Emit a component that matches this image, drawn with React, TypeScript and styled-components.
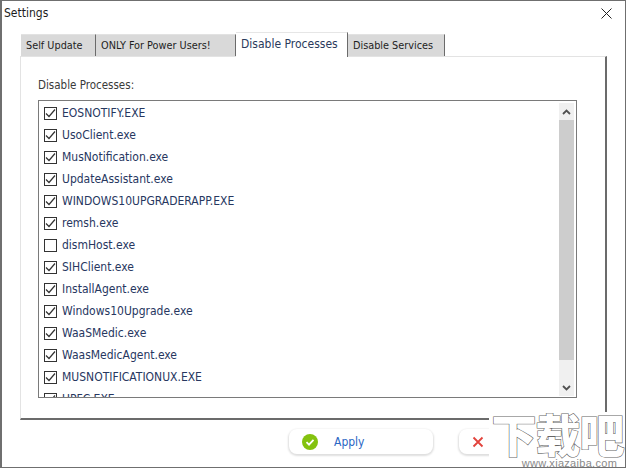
import React from "react";
import styled, { createGlobalStyle } from "styled-components";

const GlobalStyle = createGlobalStyle`
  html, body {
    margin: 0;
    padding: 0;
    background: #fff;
  }
  body {
    font-family: "DejaVu Sans Condensed", "DejaVu Sans", sans-serif;
    font-stretch: condensed;
  }
`;

const Window = styled.div`
  position: relative;
  box-sizing: border-box;
  width: 626px;
  height: 468px;
  overflow: hidden;
  background: #fff;
  border: 1px solid #6f6f6f;
  border-left-width: 2px;
  display: flex;
  flex-direction: column;
`;

const TitleBar = styled.div`
  height: 24px;
  flex: none;
  display: flex;
  align-items: center;
  justify-content: space-between;
  padding: 0 13px 0 2px;
  font-size: 12px;
  color: #1c1c1c;
`;

const TabStrip = styled.div`
  flex: none;
  height: 24px;
  margin-left: 19px;
  margin-top: 7px;
  display: flex;
  align-items: flex-end;
  position: relative;
  z-index: 1;
`;

const Tab = styled.div<{ $active?: boolean; $width: number }>`
  box-sizing: border-box;
  width: ${(p) => p.$width}px;
  height: ${(p) => (p.$active ? 25 : 22)}px;
  margin-bottom: ${(p) => (p.$active ? -1 : 0)}px;
  padding-left: 5px;
  padding-bottom: ${(p) => (p.$active ? 3 : 0)}px;
  display: flex;
  align-items: center;
  background: ${(p) => (p.$active ? "#fff" : "#d9d9d9")};
  border-right: 1px solid #6b6b6b;
  border-top: 1px solid ${(p) => (p.$active ? "#e6e6e6" : "#e2e2e2")};
  font-size: ${(p) => (p.$active ? 12 : 10.8)}px;
  color: ${(p) => (p.$active ? "#2a3a5c" : "#1e1e1e")};
  white-space: nowrap;
`;

const Pane = styled.div`
  box-sizing: border-box;
  margin: 0 18px 0 18px;
  height: 364px;
  flex: none;
  border-top: 1px solid #e3e3e3;
  border-left: 1px solid #e3e3e3;
  border-right: 2px solid #6b6b6b;
  border-bottom: 2px solid #6b6b6b;
  padding: 21px 28px 0 17px;
`;

const GroupLabel = styled.div`
  font-size: 11.5px;
  line-height: 14px;
  color: #3a3a3a;
  margin-bottom: 8px;
`;

const ListBox = styled.div`
  box-sizing: border-box;
  height: 298px;
  border: 1px solid #7a7a7a;
  display: flex;
  overflow: hidden;
`;

const Rows = styled.div`
  flex: 1;
  padding: 1px 0 0 5px;
  overflow: hidden;
`;

const Row = styled.div`
  height: 22px;
  display: flex;
  align-items: center;
  gap: 5px;
  font-size: 12px;
  color: #27375f;
  white-space: nowrap;
`;

const Box = styled.span`
  box-sizing: border-box;
  width: 13px;
  height: 13px;
  flex: none;
  border: 1px solid #333;
  background: #fff;
  display: flex;
  align-items: center;
  justify-content: center;
`;

const ScrollBar = styled.div`
  width: 15px;
  flex: none;
  margin: 2px 2px 1px 0;
  background: #f0f0f0;
  display: flex;
  flex-direction: column;
`;

const ScrollButton = styled.div`
  height: 17px;
  flex: none;
  display: flex;
  align-items: center;
  justify-content: center;
`;

const ScrollThumb = styled.div`
  height: 240px;
  flex: none;
  background: #cdcdcd;
`;

const ScrollTrack = styled.div`
  flex: 1;
`;

const Footer = styled.div`
  flex: 1;
  display: flex;
  padding: 9px 0 0 287px;
  gap: 26px;
`;

const ActionButton = styled.div<{ $width: number }>`
  box-sizing: border-box;
  width: ${(p) => p.$width}px;
  height: 25px;
  border-radius: 8px;
  background: #fff;
  box-shadow: 0 1px 2px 1px rgba(0, 0, 0, 0.13);
  display: flex;
  align-items: center;
  padding-left: 13px;
  gap: 16px;
  font-size: 12px;
  color: #2a66c4;
`;

const Watermark = styled.div`
  position: absolute;
  right: -1px;
  bottom: -1px;
  width: 137px;
  height: 56px;
  background: #fff;
  display: flex;
  flex-direction: column;
  align-items: center;
`;

const WatermarkTitle = styled.div`
  font-family: "Noto Sans CJK SC", sans-serif;
  font-weight: 900;
  font-size: 45px;
  height: 46px;
  line-height: 44px;
  letter-spacing: -1px;
  color: #fff;
  -webkit-text-stroke: 1.2px #666;
  paint-order: stroke fill;
  white-space: nowrap;
`;

const WatermarkUrl = styled.div`
  font-family: "Liberation Sans", sans-serif;
  font-size: 11px;
  line-height: 10px;
  letter-spacing: 0.3px;
  color: #8a8a8a;
  margin-left: 24px;
  white-space: nowrap;
`;

const Check = () => (
  <svg width="11" height="11" viewBox="0 0 11 11" fill="none">
    <path d="M1 5.5 L4 8.5 L10 1.5" stroke="#333" strokeWidth="1.2" />
  </svg>
);

const Chevron = ({ up }: { up?: boolean }) => (
  <svg width="9" height="6" viewBox="0 0 9 6" fill="none">
    <path
      d={up ? "M1 5 L4.5 1.5 L8 5" : "M1 1 L4.5 4.5 L8 1"}
      stroke="#505050"
      strokeWidth="1.8"
    />
  </svg>
);

const tabs = [
  { label: "Self Update", width: 75 },
  { label: "ONLY For Power Users!", width: 140 },
  { label: "Disable Processes", width: 112, active: true },
  { label: "Disable Services", width: 97 },
];

const processes = [
  { name: "EOSNOTIFY.EXE", on: true },
  { name: "UsoClient.exe", on: true },
  { name: "MusNotification.exe", on: true },
  { name: "UpdateAssistant.exe", on: true },
  { name: "WINDOWS10UPGRADERAPP.EXE", on: true },
  { name: "remsh.exe", on: true },
  { name: "dismHost.exe", on: false },
  { name: "SIHClient.exe", on: true },
  { name: "InstallAgent.exe", on: true },
  { name: "Windows10Upgrade.exe", on: true },
  { name: "WaaSMedic.exe", on: true },
  { name: "WaasMedicAgent.exe", on: true },
  { name: "MUSNOTIFICATIONUX.EXE", on: true },
  { name: "UPFC.EXE", on: true },
];

export default function App() {
  return (
    <>
      <GlobalStyle />
      <Window>
        <TitleBar>
          Settings
          <svg width="11" height="11" viewBox="0 0 11 11" fill="none">
            <path d="M0.5 0.5 L10.5 10.5 M10.5 0.5 L0.5 10.5" stroke="#222" strokeWidth="1" />
          </svg>
        </TitleBar>
        <TabStrip>
          {tabs.map((t) => (
            <Tab key={t.label} $active={t.active} $width={t.width}>
              {t.label}
            </Tab>
          ))}
        </TabStrip>
        <Pane>
          <GroupLabel>Disable Processes:</GroupLabel>
          <ListBox>
            <Rows>
              {processes.map((p) => (
                <Row key={p.name}>
                  <Box>{p.on && <Check />}</Box>
                  {p.name}
                </Row>
              ))}
            </Rows>
            <ScrollBar>
              <ScrollButton>
                <Chevron up />
              </ScrollButton>
              <ScrollThumb />
              <ScrollTrack />
              <ScrollButton>
                <Chevron />
              </ScrollButton>
            </ScrollBar>
          </ListBox>
        </Pane>
        <Footer>
          <ActionButton $width={144}>
            <svg width="16" height="16" viewBox="0 0 16 16">
              <circle cx="8" cy="8" r="8" fill="#84c20f" />
              <path d="M4.5 8.2 L7 10.6 L11.5 5.8" stroke="#fff" strokeWidth="1.8" fill="none" />
            </svg>
            Apply
          </ActionButton>
          <ActionButton $width={80}>
            <svg width="12" height="12" viewBox="0 0 12 12">
              <path d="M1.5 1.5 L10.5 10.5 M10.5 1.5 L1.5 10.5" stroke="#e2433c" strokeWidth="1.8" />
            </svg>
          </ActionButton>
        </Footer>
        <Watermark>
          <WatermarkTitle>下载吧</WatermarkTitle>
          <WatermarkUrl>www.xiazaiba.com</WatermarkUrl>
        </Watermark>
      </Window>
    </>
  );
}
